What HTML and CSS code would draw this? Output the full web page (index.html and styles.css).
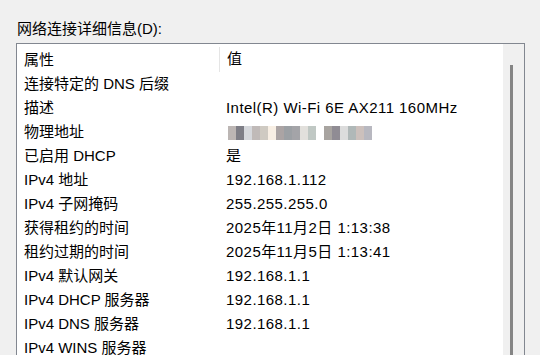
FILE: index.html
```html
<!DOCTYPE html>
<html>
<head>
    <title>网络连接详细信息</title>
    <link rel="stylesheet" href="styles.css">
</head>
<body>
    <div class="group-label">网络连接详细信息(D):</div>
    <div class="listbox">
        <div class="list">
            <div class="header">
                <div class="col col-name">属性</div>
                <div class="col col-value">值</div>
            </div>
            <div class="row"><div class="col col-name">连接特定的 DNS 后缀</div><div class="col col-value"></div></div>
            <div class="row"><div class="col col-name">描述</div><div class="col col-value">Intel(R) Wi-Fi 6E AX211 160MHz</div></div>
            <div class="row"><div class="col col-name">物理地址</div><div class="col col-value"><span class="mosaic mosaic-a"></span><span class="mosaic mosaic-b"></span></div></div>
            <div class="row"><div class="col col-name">已启用 DHCP</div><div class="col col-value">是</div></div>
            <div class="row"><div class="col col-name">IPv4 地址</div><div class="col col-value">192.168.1.112</div></div>
            <div class="row"><div class="col col-name">IPv4 子网掩码</div><div class="col col-value">255.255.255.0</div></div>
            <div class="row"><div class="col col-name">获得租约的时间</div><div class="col col-value">2025年11月2日 1:13:38</div></div>
            <div class="row"><div class="col col-name">租约过期的时间</div><div class="col col-value">2025年11月5日 1:13:41</div></div>
            <div class="row"><div class="col col-name">IPv4 默认网关</div><div class="col col-value">192.168.1.1</div></div>
            <div class="row"><div class="col col-name">IPv4 DHCP 服务器</div><div class="col col-value">192.168.1.1</div></div>
            <div class="row"><div class="col col-name">IPv4 DNS 服务器</div><div class="col col-value">192.168.1.1</div></div>
            <div class="row"><div class="col col-name">IPv4 WINS 服务器</div><div class="col col-value"></div></div>
        </div>
        <div class="scrollbar">
            <div class="thumb"></div>
        </div>
    </div>
</body>
</html>
```

FILE: styles.css
```css
body {
    margin: 0;
    background-color: #f0f0f0;
    font-family: "Liberation Sans", "Noto Sans CJK SC", sans-serif;
    font-size: 15px;
    color: #000;
    height: 355px;
    overflow: hidden;
}
.group-label {
    padding: 19px 0 0 17px;
    height: 24px;
    line-height: 20px;
}
/* List box */
.listbox {
    margin-left: 16px;
    width: 507px;
    height: 400px;
    border: 1px solid #828790;
    display: flex;
}
.list {
    flex: 1;
    background-color: #fff;
}
.header,
.row {
    display: flex;
    align-items: center;
}
.header {
    height: 28px;
}
.row {
    height: 24px;
}
.col {
    padding-left: 7px;
    white-space: nowrap;
    line-height: 20px;
}
.col-name {
    width: 195px;
}
.header .col-name {
    border-right: 1px solid #e5e5e5;
    height: 25px;
    line-height: 25px;
    margin-top: 2px;
}
.header .col-value {
    margin-top: 2px;
}
.col-value {
    flex: 1;
    letter-spacing: 0.45px;
}
/* Pixelated MAC address */
.mosaic {
    display: inline-block;
    height: 14px;
    vertical-align: middle;
}
.mosaic-a {
    width: 88px;
    margin-left: 2px;
    background: linear-gradient(to right,
        #bcb6b4 0 8px, #7e7e86 8px 16px, #d6d8dc 16px 24px, #c0bab8 24px 32px,
        #cfcac2 32px 40px, #f8efe4 40px 48px, #aba4a4 48px 56px, #9ca0a4 56px 64px,
        #a4a4a8 64px 72px, #e2e0dc 72px 80px, #c0c8c4 80px 88px);
}
.mosaic-b {
    width: 48px;
    margin-left: 8px;
    background: linear-gradient(to right,
        #a8a4a0 0 8px, #908c94 8px 16px, #dcdcdc 16px 24px,
        #b0b8b8 24px 32px, #ccc0bc 32px 40px, #b8b8c0 40px 48px);
}
/* Scrollbar */
.scrollbar {
    width: 21px;
    background-color: #f0f0f0;
    position: relative;
}
.thumb {
    position: absolute;
    left: 7px;
    top: 21px;
    width: 3px;
    height: 400px;
    background-color: #858585;
}
```
